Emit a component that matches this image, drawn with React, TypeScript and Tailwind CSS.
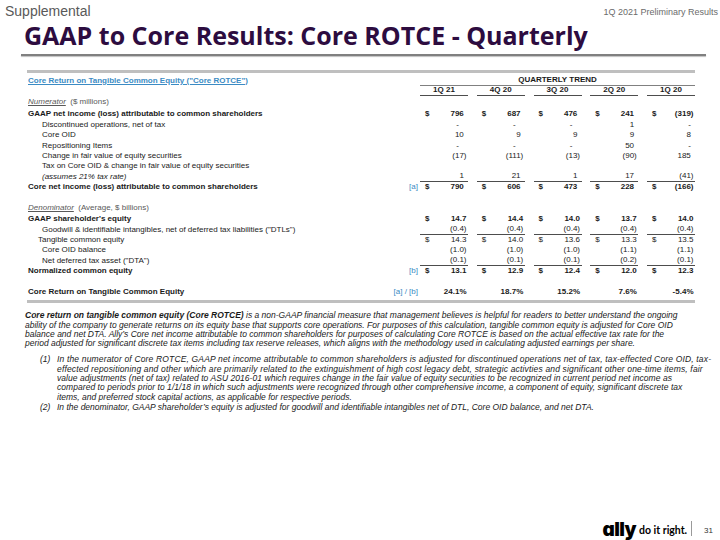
import React from "react";

const sans = "font-['Liberation_Sans',Arial,Helvetica,sans-serif]";
const blue = "text-[#3b8bc4]";
const cols = ["1Q 21", "4Q 20", "3Q 20", "2Q 20", "1Q 20"];

type Kind = "num" | "dec" | "pct";

type RowProps = {
  label?: React.ReactNode;
  tag?: string;
  values?: string[];
  dollar?: boolean;
  bold?: boolean;
  line?: boolean;
  pad?: string;
  kind?: Kind;
  className?: string;
};

function Value({ v, kind, last }: { v: string; kind: Kind; last: boolean }) {
  if (v === "-") return <span className={last ? "pr-[4px]" : "pr-[9px]"}>-</span>;
  if (kind === "num" && !v.startsWith("("))
    return (
      <span className="pr-[1.5px]">
        {v}
        <span className="invisible">)</span>
      </span>
    );
  return <span className="pr-[1.5px]">{v}</span>;
}

function Row({ label, tag, values, dollar, bold, line, pad = "pl-[1px]", kind = "num", className = "" }: RowProps) {
  const cells = values ?? ["", "", "", "", ""];
  return (
    <div className={`flex h-[10.4px] items-center ${bold ? "font-bold" : ""} ${className}`}>
      <div className="flex h-full flex-1 items-center justify-between pr-[2px]">
        <span className={`whitespace-nowrap ${pad}`}>{label}</span>
        {tag && <span className={`font-normal ${blue}`}>{tag}</span>}
      </div>
      <div className="flex h-full gap-[8.75px]">
        {cells.map((v, i) => (
          <div
            key={i}
            className={`flex h-full w-[48px] items-center justify-between ${line ? "border-b border-[#4d4d4d]" : ""}`}
          >
            <span className="pl-[5px]">{dollar ? "$" : ""}</span>
            {v && <Value v={v} kind={kind} last={i === 4} />}
          </div>
        ))}
      </div>
    </div>
  );
}

function Section({ name, unit }: { name: string; unit: string }) {
  return (
    <span className="text-[#595959]">
      <span className="italic underline">{name}</span>
      <span>&nbsp;&nbsp;{unit}</span>
    </span>
  );
}

export default function App() {
  return (
    <div className={`flex h-[540px] w-[720px] flex-col overflow-hidden bg-white text-[#1a1a1a] ${sans}`}>
      <div className="flex items-start justify-between pt-[3px]">
        <span className="pl-[5px] text-[14px] leading-[16px] text-[#595959]">Supplemental</span>
        <span className="mt-[4px] pr-[2px] text-[9px] leading-[10px] text-[#6b6b6b]">1Q 2021 Preliminary Results</span>
      </div>

      <h1 className="mt-[4px] pl-[24px] font-['Open_Sans',sans-serif] text-[25px] font-bold leading-[25px] text-[#2d0c40]">
        GAAP to Core Results: Core ROTCE - Quarterly
      </h1>
      <div className="ml-[21px] mt-[6px] h-[2px] w-[685px] bg-[#808080] shadow-[0_1px_1px_rgba(0,0,0,0.25)]" />

      <div className="ml-[27px] mt-[13.5px] w-[668px] text-[8px] leading-none">
        <div className="h-[3px] bg-[#bfbfbf]" />
        <div className="mt-[3px] flex h-[10px] items-center">
          <div className="flex-1 pl-[1px]">
            <span className={`font-bold underline ${blue}`}>Core Return on Tangible Common Equity ("Core ROTCE")</span>
          </div>
          <div className="flex h-full w-[275px] items-center justify-center border-b-[1.5px] border-[#808080] font-bold">
            QUARTERLY TREND
          </div>
        </div>
        <div className="flex h-[10.5px] items-center">
          <div className="flex-1" />
          <div className="flex h-full gap-[8.75px]">
            {cols.map((c) => (
              <div key={c} className="flex h-full w-[48px] items-center justify-center border-b border-[#4d4d4d] font-bold">
                {c}
              </div>
            ))}
          </div>
        </div>

        <Row className="mt-[1px]" label={<Section name="Numerator" unit="($ millions)" />} />
        <Row
          className="mt-[1.9px]"
          bold
          dollar
          label="GAAP net income (loss) attributable to common shareholders"
          values={["796", "687", "476", "241", "(319)"]}
        />
        <Row pad="pl-[15px]" label="Discontinued operations, net of tax" values={["-", "-", "-", "1", "-"]} />
        <Row pad="pl-[15px]" label="Core OID" values={["10", "9", "9", "9", "8"]} />
        <Row pad="pl-[15px]" label="Repositioning Items" values={["-", "-", "-", "50", "-"]} />
        <Row pad="pl-[15px]" label="Change in fair value of equity securities" values={["(17)", "(111)", "(13)", "(90)", "185"]} />
        <Row pad="pl-[15px]" label="Tax on Core OID & change in fair value of equity securities" />
        <Row
          pad="pl-[15px]"
          line
          label={<span className="italic">(assumes 21% tax rate)</span>}
          values={["1", "21", "1", "17", "(41)"]}
        />
        <Row
          bold
          dollar
          tag="[a]"
          label="Core net income (loss) attributable to common shareholders"
          values={["790", "606", "473", "228", "(166)"]}
        />

        <Row className="mt-[10px]" label={<Section name="Denominator" unit="(Average, $ billions)" />} />
        <Row
          className="mt-[1.2px]"
          bold
          dollar
          kind="dec"
          label="GAAP shareholder's equity"
          values={["14.7", "14.4", "14.0", "13.7", "14.0"]}
        />
        <Row
          pad="pl-[15px]"
          kind="dec"
          line
          label={'Goodwill & identifiable intangibles, net of deferred tax liabilities ("DTLs")'}
          values={["(0.4)", "(0.4)", "(0.4)", "(0.4)", "(0.4)"]}
        />
        <Row
          pad="pl-[11px]"
          kind="dec"
          dollar
          label="Tangible common equity"
          values={["14.3", "14.0", "13.6", "13.3", "13.5"]}
        />
        <Row pad="pl-[15px]" kind="dec" label="Core OID balance" values={["(1.0)", "(1.0)", "(1.0)", "(1.1)", "(1.1)"]} />
        <Row
          pad="pl-[15px]"
          kind="dec"
          line
          label={'Net deferred tax asset ("DTA")'}
          values={["(0.1)", "(0.1)", "(0.1)", "(0.2)", "(0.1)"]}
        />
        <Row
          bold
          dollar
          kind="dec"
          tag="[b]"
          label="Normalized common equity"
          values={["13.1", "12.9", "12.4", "12.0", "12.3"]}
        />

        <Row
          className="mt-[10.6px]"
          bold
          kind="pct"
          tag="[a] / [b]"
          label="Core Return on Tangible Common Equity"
          values={["24.1%", "18.7%", "15.2%", "7.6%", "-5.4%"]}
        />
        <div className="mt-[2.7px] h-[3px] bg-[#bfbfbf]" />
      </div>

      <div className="ml-[25px] mt-[8.1px] whitespace-nowrap text-[8.5px] italic leading-[9.4px] text-[#1a1a1a]">
        <p>
          <span className="font-bold">Core return on tangible common equity (Core ROTCE)</span> is a non-GAAP financial measure
          that management believes is helpful for readers to better understand the ongoing
        </p>
        <p>
          ability of the company to generate returns on its equity base that supports core operations. For purposes of this
          calculation, tangible common equity is adjusted for Core OID
        </p>
        <p>
          balance and net DTA. Ally’s Core net income attributable to common shareholders for purposes of calculating Core
          ROTCE is based on the actual effective tax rate for the
        </p>
        <p>
          period adjusted for significant discrete tax items including tax reserve releases, which aligns with the methodology
          used in calculating adjusted earnings per share.
        </p>
      </div>

      <div className="ml-[40px] mt-[6.4px] flex whitespace-nowrap text-[8.5px] italic leading-[9.4px]">
        <span className="w-[17px]">(1)</span>
        <div>
          <p className="tracking-[0.16px]">
            In the numerator of Core ROTCE, GAAP net income attributable to common shareholders is adjusted for discontinued
            operations net of tax, tax-effected Core OID, tax-
          </p>
          <p className="tracking-[0.16px]">
            effected repositioning and other which are primarily related to the extinguishment of high cost legacy debt,
            strategic activties and significant other one-time items, fair
          </p>
          <p className="tracking-[0.05px]">
            value adjustments (net of tax) related to ASU 2016-01 which requires change in the fair value of equity securities
            to be recognized in current period net income as
          </p>
          <p className="tracking-[0.05px]">
            compared to periods prior to 1/1/18 in which such adjustments were recognized through other comprehensive income, a
            component of equity, significant discrete tax
          </p>
          <p>items, and preferred stock capital actions, as applicable for respective periods.</p>
        </div>
      </div>
      <div className="ml-[40px] mt-[1.3px] flex whitespace-nowrap text-[8.5px] italic leading-[9.4px]">
        <span className="w-[17px]">(2)</span>
        <p>
          In the denominator, GAAP shareholder’s equity is adjusted for goodwill and identifiable intangibles net of DTL, Core
          OID balance, and net DTA.
        </p>
      </div>

      <div className="mt-auto flex items-end justify-end pb-[2px] pr-[7px]">
        <span className="font-['Inter',sans-serif] text-[19px] font-black leading-[17px] tracking-[-0.6px] text-black [font-feature-settings:'cv11']">
          ally
        </span>
        <span className="mb-[3px] ml-[3px] font-['Lato',sans-serif] text-[10.5px] font-bold leading-[10px] text-black">
          do it right.
        </span>
        <span className="mb-[2px] ml-[4px] h-[15px] w-px bg-[#9a9a9a]" />
        <span className="mb-[3px] ml-[12px] text-[8px] leading-[9px] text-[#333]">31</span>
      </div>
    </div>
  );
}
